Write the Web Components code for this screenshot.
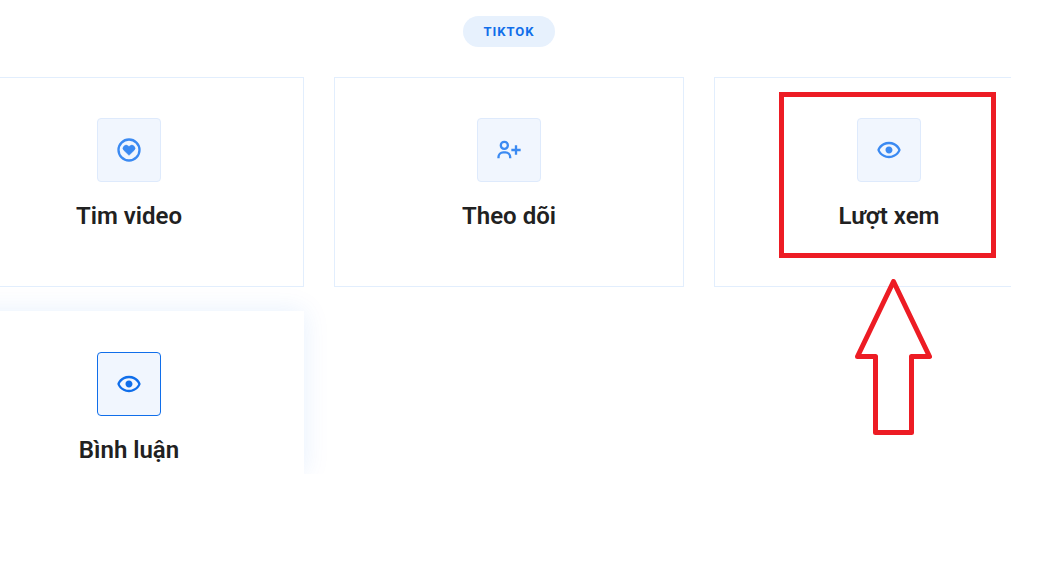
<!DOCTYPE html>
<html lang="vi">
<head>
<meta charset="utf-8">
<title>TikTok</title>
<style>
    body {
        margin: 0;
        background: #fff;
        color: #212121;
        font-family: Roboto, "Liberation Sans", sans-serif;
    }
</style>
</head>
<body>
<service-section>
    <section-badge slot="badge">TIKTOK</section-badge>
    <service-card icon="heart">Tim video</service-card>
    <service-card icon="follow">Theo dõi</service-card>
    <service-card icon="eye">Lượt xem<mark-note slot="note"></mark-note></service-card>
    <service-card icon="eye" active>Bình luận</service-card>
</service-section>

<script>
const ICONS = {
    heart: `
        <circle cx="12" cy="12" r="9" fill="none" stroke="currentColor" stroke-width="2"/>
        <path d="M12 16.6l4.3-4.2a2.6 2.6 0 0 0 .1-3.7 2.7 2.7 0 0 0-3.8-.1l-.6.5-.6-.5a2.7 2.7 0 0 0-3.8.1 2.6 2.6 0 0 0 .1 3.7z" stroke="currentColor" stroke-width=".4" stroke-linejoin="round"/>`,
    follow: `
        <path d="M19 8h-2v3h-3v2h3v3h2v-3h3v-2h-3zM4 8a3.91 3.91 0 0 0 4 4 3.91 3.91 0 0 0 4-4 3.91 3.91 0 0 0-4-4 3.91 3.91 0 0 0-4 4zm6 0a1.91 1.91 0 0 1-2 2 1.91 1.91 0 0 1-2-2 1.91 1.91 0 0 1 2-2 1.91 1.91 0 0 1 2 2zM4 18a3 3 0 0 1 3-3h2a3 3 0 0 1 3 3v1h2v-1a5 5 0 0 0-5-5H7a5 5 0 0 0-5 5v1h2z"/>`,
    eye: `
        <path d="M12 9a3.02 3.02 0 0 0-3 3c0 1.642 1.358 3 3 3 1.641 0 3-1.358 3-3 0-1.641-1.359-3-3-3z"/>
        <path d="M12 5c-7.633 0-9.927 6.617-9.948 6.684L1.946 12l.105.316C2.073 12.383 4.367 19 12 19s9.927-6.617 9.948-6.684l.106-.316-.105-.316C21.927 11.617 19.633 5 12 5zm0 12c-5.351 0-7.424-3.846-7.926-5C4.578 10.842 6.652 7 12 7c5.351 0 7.424 3.846 7.926 5-.504 1.158-2.578 5-7.926 5z"/>`
};

class ServiceSection extends HTMLElement
{
    constructor() {
        super();
        this.attachShadow({ mode: "open" });
        this.shadowRoot.innerHTML = `
            <style>
            :host {
                display: block;
                margin-right: 32px;
                overflow: hidden;
            }
            /* the row of cards runs past both edges of the section */
            .container {
                margin: 0 -53px 0 -46px;
                padding-top: 16px;
            }
            .head {
                display: flex;
                justify-content: center;
                margin-bottom: 30px;
            }
            .grid {
                display: grid;
                grid-template-columns: repeat(3, minmax(0, 1fr));
                gap: 24px 30px;
            }
            </style>
            <section class="container">
                <div class="head"><slot name="badge"></slot></div>
                <div class="grid"><slot></slot></div>
            </section>
        `;
    }
}

class SectionBadge extends HTMLElement
{
    constructor() {
        super();
        this.attachShadow({ mode: "open" });
        this.shadowRoot.innerHTML = `
            <style>
            :host {
                display: block;
                padding: 8px 20px;
                border-radius: 50px;
                background: #e7f1fd;
                color: #106eea;
                font-size: 13px;
                font-weight: 700;
                line-height: 15px;
                letter-spacing: 1px;
            }
            </style>
            <slot></slot>
        `;
    }
}

class ServiceCard extends HTMLElement
{
    constructor() {
        super();
        this.attachShadow({ mode: "open" });
        this.shadowRoot.innerHTML = `
            <style>
            :host {
                display: flex;
                flex-direction: column;
                align-items: center;
                position: relative;
                padding: 40px 20px 56px;
                border: 1px solid #e2eefd;
                text-align: center;
            }
            :host([active]) {
                padding-bottom: 9px;
                border-color: #fff;
                box-shadow: 0 0 25px rgba(16, 110, 234, 0.1);
            }
            .icon {
                display: flex;
                align-items: center;
                justify-content: center;
                box-sizing: border-box;
                width: 64px;
                height: 64px;
                border: 1px solid #deeafc;
                border-radius: 4px;
                background: #f1f6fe;
                color: #3b8af2;
            }
            :host([active]) .icon {
                border-color: #106eea;
                color: #106eea;
            }
            svg {
                width: 28px;
                height: 28px;
                fill: currentColor;
            }
            h4 {
                margin: 20px 0 0;
                font-size: 24px;
                font-weight: 600;
                line-height: 28px;
            }
            </style>
            <div class="icon"><svg viewBox="0 0 24 24" aria-hidden="true"></svg></div>
            <h4><slot></slot></h4>
            <slot name="note"></slot>
        `;
        this.svg = this.shadowRoot.querySelector('svg');
    }

    connectedCallback()
    {
        this.svg.innerHTML = ICONS[this.getAttribute('icon')] || "";
    }
}

// red frame round a card's content, with an arrow that points up at it
class MarkNote extends HTMLElement
{
    constructor() {
        super();
        this.attachShadow({ mode: "open" });
        this.shadowRoot.innerHTML = `
            <style>
            :host {
                position: absolute;
                top: 14px;
                left: 64px;
                pointer-events: none;
            }
            .frame {
                box-sizing: border-box;
                width: 217px;
                height: 166px;
                border: 5px solid #ed1c24;
            }
            svg {
                display: block;
                width: 77px;
                height: 157px;
                margin: 21px 0 0 76px;
            }
            </style>
            <div class="frame"></div>
            <svg viewBox="0 0 77 157" aria-hidden="true">
                <path d="M38.5 2.5L74.5 77.5H56.5V153.5H20.5V77.5H2.5Z" fill="none" stroke="#ed1c24" stroke-width="5" stroke-linejoin="round"/>
            </svg>
        `;
    }
}

customElements.define('service-section', ServiceSection);
customElements.define('section-badge', SectionBadge);
customElements.define('service-card', ServiceCard);
customElements.define('mark-note', MarkNote);
</script>
</body>
</html>
